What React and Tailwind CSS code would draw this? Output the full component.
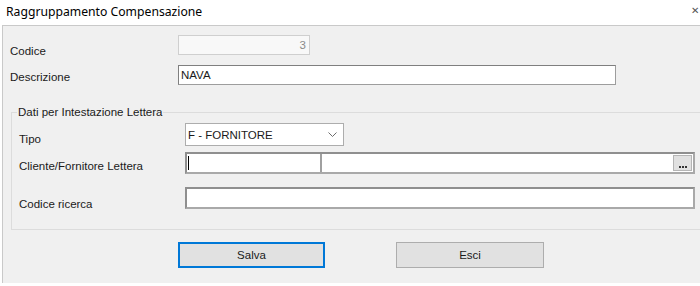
export default function App() {
  const lbl = "font-['Liberation_Sans',Arial,sans-serif] text-[11.5px] leading-[14px] text-[#1a1a1a]";
  return (
    <div className="w-[700px] h-[286px] bg-white overflow-hidden flex flex-col">
      <div className="h-[25px] flex items-center justify-between pl-[6px] shrink-0">
        <span className="font-['Noto_Sans',sans-serif] text-[12.2px] text-black">Raggruppamento Compensazione</span>
        <span className="font-['Liberation_Sans',sans-serif] text-[10px] text-[#555] mr-[1px] -mt-[4px]">✕</span>
      </div>
      <div className="ml-[2px] h-[258px] bg-[#f0f0f0] border-t border-l border-[#c9c9c9] flex flex-col">
        {/* Codice */}
        <div className="flex items-start mt-[9px] pl-[7px]">
          <div className={`${lbl} w-[168px] mt-[9px]`}>Codice</div>
          <div className="w-[132px] h-[20px] bg-[#f8f8f8] border border-[#cfcfcf] flex items-center justify-end pr-[3px]">
            <span className={`${lbl} text-[#8a8a8a]`}>3</span>
          </div>
        </div>
        {/* Descrizione */}
        <div className="flex items-start mt-[7px] pl-[7px]">
          <div className={`${lbl} w-[168px] mt-[5px]`}>Descrizione</div>
          <div className="w-[438px] h-[20px] bg-white border border-[#9d9d9d] border-t-[#7f7f7f] border-l-[#7f7f7f] flex items-center pl-[2px]">
            <span className={lbl}>NAVA</span>
          </div>
        </div>
        {/* Group box */}
        <fieldset className="ml-[8px] mt-[20px] -mr-[10px] border border-[#dcdcdc] pb-[18px]">
          <legend className={`${lbl} ml-[5px] px-[1px] leading-[15px]`}>Dati per Intestazione Lettera</legend>
          {/* Tipo */}
          <div className="flex items-start mt-[3px] pl-[7px]">
            <div className={`${lbl} w-[166px] mt-[9px]`}>Tipo</div>
            <div className="w-[159px] h-[23px] bg-white border border-[#adadad] flex items-center justify-between pl-[2px] pr-[6px]">
              <span className={lbl}>F - FORNITORE</span>
              <svg width="9" height="6" viewBox="0 0 9 6" fill="none">
                <path d="M0.5 0.5 L4.5 4.5 L8.5 0.5" stroke="#6d6d6d" strokeWidth="1" />
              </svg>
            </div>
          </div>
          {/* Cliente/Fornitore Lettera */}
          <div className="flex items-start mt-[6px] pl-[7px]">
            <div className={`${lbl} w-[166px] mt-[7px]`}>Cliente/Fornitore Lettera</div>
            <div className="w-[510px] h-[22px] bg-white border-2 border-[#a9a9a9] border-t-[#8f8f8f] border-l-[#8f8f8f] flex items-center">
              <div className="w-[133px] h-full flex items-center pl-[1px] shrink-0">
                <div className="w-[1px] h-[14px] bg-black"></div>
              </div>
              <div className="w-[2px] h-[18px] bg-[#a0a0a0] shrink-0"></div>
              <div className="flex-1"></div>
              <div className="w-[19px] h-[16px] bg-[#e1e1e1] border border-[#b5b5b5] flex items-end justify-center pb-[2px] mr-[1px]">
                <div className="flex gap-[1px]">
                  <div className="w-[2px] h-[2px] bg-[#333]"></div>
                  <div className="w-[2px] h-[2px] bg-[#333]"></div>
                  <div className="w-[2px] h-[2px] bg-[#333]"></div>
                </div>
              </div>
            </div>
          </div>
          {/* Codice ricerca */}
          <div className="flex items-start mt-[13px] pl-[7px]">
            <div className={`${lbl} w-[166px] mt-[10px]`}>Codice ricerca</div>
            <div className="w-[510px] h-[22px] bg-white border-2 border-[#a9a9a9] border-t-[#8f8f8f] border-l-[#8f8f8f]"></div>
          </div>
        </fieldset>
        {/* Buttons */}
        <div className="flex mt-[12px] pl-[175px] gap-[71px]">
          <div className="w-[147px] h-[26px] bg-[#e1e1e1] border-2 border-[#0078d7] flex items-center justify-center">
            <span className={lbl}>Salva</span>
          </div>
          <div className="w-[148px] h-[26px] bg-[#e1e1e1] border border-[#adadad] flex items-center justify-center">
            <span className={lbl}>Esci</span>
          </div>
        </div>
      </div>
    </div>
  );
}
